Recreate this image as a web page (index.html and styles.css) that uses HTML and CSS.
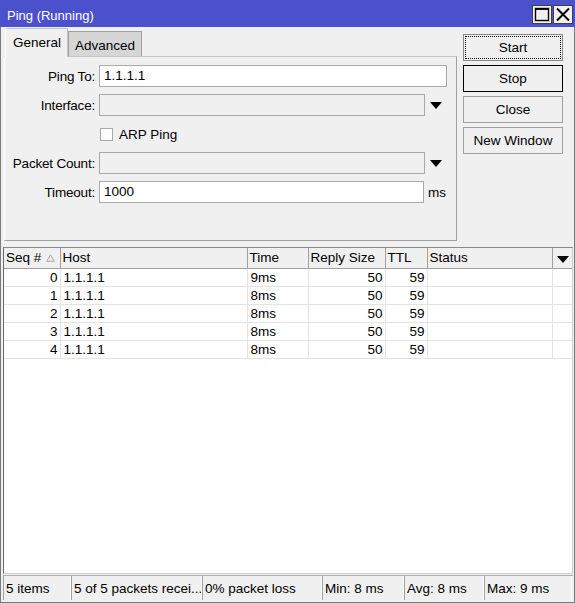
FILE: index.html
```html
<!DOCTYPE html>
<html>
<head>
<meta charset="utf-8">
<link rel="stylesheet" href="styles.css">
</head>
<body>
<div class="window">
  <div class="titlebar">
    <span class="title">Ping (Running)</span>
    <div class="tb-btns">
      <span class="tb-btn"><svg width="18" height="17" viewBox="0 0 18 17"><rect x="2.5" y="2.5" width="13" height="12" fill="none" stroke="#000" stroke-width="1.4"/><line x1="2.5" y1="3.2" x2="15.5" y2="3.2" stroke="#000" stroke-width="1.4"/></svg></span>
      <span class="tb-btn"><svg width="18" height="17" viewBox="0 0 18 17"><path d="M3 2.5 L15 14.5 M15 2.5 L3 14.5" stroke="#000" stroke-width="2" fill="none"/></svg></span>
    </div>
  </div>
  <div class="top">
    <div class="tabs-area">
      <div class="tabs">
        <div class="tab active">General</div>
        <div class="tab">Advanced</div>
      </div>
      <div class="panel">
        <div class="row">
          <label class="lbl">Ping To:</label>
          <div class="input w348">1.1.1.1</div>
        </div>
        <div class="row">
          <label class="lbl">Interface:</label>
          <div class="input disabled w326"></div>
          <span class="dd"><svg width="12" height="7" viewBox="0 0 12 7"><path d="M0 0 H12 L6 7 Z" fill="#000"/></svg></span>
        </div>
        <div class="row">
          <span class="lbl"></span>
          <span class="checkbox"></span>
          <span class="cb-label">ARP Ping</span>
        </div>
        <div class="row">
          <label class="lbl">Packet Count:</label>
          <div class="input disabled w326"></div>
          <span class="dd"><svg width="12" height="7" viewBox="0 0 12 7"><path d="M0 0 H12 L6 7 Z" fill="#000"/></svg></span>
        </div>
        <div class="row">
          <label class="lbl">Timeout:</label>
          <div class="input w325">1000</div>
          <span class="unit">ms</span>
        </div>
      </div>
    </div>
    <div class="buttons">
      <div class="btn focus"><span>Start</span></div>
      <div class="btn default"><span>Stop</span></div>
      <div class="btn"><span>Close</span></div>
      <div class="btn"><span>New Window</span></div>
    </div>
  </div>
  <div class="table-wrap">
    <table class="grid">
      <colgroup>
        <col class="c-seq"><col class="c-host"><col class="c-time"><col class="c-size"><col class="c-ttl"><col class="c-status"><col class="c-menu">
      </colgroup>
      <thead>
        <tr>
          <th><span class="th-seq">Seq # <svg class="sort" width="9" height="8" viewBox="0 0 9 8"><path d="M4.5 0.8 L8.3 7.3 H0.7 Z" fill="none" stroke="#a8a8a8" stroke-width="1"/></svg></span></th>
          <th>Host</th>
          <th>Time</th>
          <th>Reply Size</th>
          <th>TTL</th>
          <th>Status</th>
          <th class="menu"><svg width="12" height="7" viewBox="0 0 12 7"><path d="M0 0 H12 L6 7 Z" fill="#000"/></svg></th>
        </tr>
      </thead>
      <tbody>
        <tr><td class="r">0</td><td>1.1.1.1</td><td>9ms</td><td class="r">50</td><td class="r">59</td><td></td><td></td></tr>
        <tr><td class="r">1</td><td>1.1.1.1</td><td>8ms</td><td class="r">50</td><td class="r">59</td><td></td><td></td></tr>
        <tr><td class="r">2</td><td>1.1.1.1</td><td>8ms</td><td class="r">50</td><td class="r">59</td><td></td><td></td></tr>
        <tr><td class="r">3</td><td>1.1.1.1</td><td>8ms</td><td class="r">50</td><td class="r">59</td><td></td><td></td></tr>
        <tr><td class="r">4</td><td>1.1.1.1</td><td>8ms</td><td class="r">50</td><td class="r">59</td><td></td><td></td></tr>
      </tbody>
    </table>
  </div>
  <div class="statusbar">
    <div class="sb w67">5 items</div>
    <div class="sb w131">5 of 5 packets recei...</div>
    <div class="sb w120">0% packet loss</div>
    <div class="sb w82">Min: 8 ms</div>
    <div class="sb w80">Avg: 8 ms</div>
    <div class="sb w89">Max: 9 ms</div>
  </div>
</div>
</body>
</html>
```

FILE: styles.css
```css
* { box-sizing: border-box; }
html, body { margin: 0; padding: 0; }
body {
  font-family: "Liberation Sans", Arial, sans-serif;
  font-size: 13.5px;
  color: #000;
  background: #f0f0f0;
}
.window {
  width: 575px;
  height: 603px;
  border: 1px solid #7a7a7a;
  border-top: none;
  background: #f0f0f0;
  display: flex;
  flex-direction: column;
}
.titlebar {
  height: 27px;
  background: #4b50cc;
  margin: 0 -1px;
  display: flex;
  align-items: center;
  justify-content: space-between;
  padding: 0 2px 0 7px;
}
.title {
  color: #fff;
  font-size: 13px;
  padding-top: 3px;
}
.tb-btns { display: flex; gap: 1px; margin-top: 1px; }
.tb-btn {
  width: 20px;
  height: 19px;
  background: #f0f0f0;
  border: 1px solid #404040;
  display: flex;
  align-items: center;
  justify-content: center;
}
.tb-btn svg { display: block; }

.top {
  display: flex;
  align-items: flex-start;
}
.tabs-area {
  margin-left: 3px;
  width: 453px;
}
.tabs {
  display: flex;
  align-items: flex-end;
  height: 29px;
  padding-left: 1px;
}
.tab {
  height: 25px;
  padding: 2px 6px 0 6px;
  background: #d6d6d6;
  border: 1px solid #a0a0a0;
  border-bottom: none;
  display: flex;
  align-items: center;
}
.tab.active {
  height: 29px;
  background: #f0f0f0;
  border-color: #c4c4c4;
  border-left-color: #fff;
  margin-bottom: -1px;
  padding: 0 6px 1px 7px;
  z-index: 1;
  position: relative;
}
.panel {
  height: 185px;
  border: 1px solid #a0a0a0;
  border-top-color: #c4c4c4;
  border-left-color: #fff;
  padding: 8px 0 0 0;
  display: flex;
  flex-direction: column;
  gap: 7px;
}
.row {
  display: flex;
  align-items: center;
  height: 22px;
}
.lbl {
  width: 90px;
  text-align: right;
  margin-right: 4px;
  white-space: nowrap;
  letter-spacing: -0.2px;
}
.input {
  height: 22px;
  background: #fff;
  border: 1px solid #a9a9a9;
  padding: 0 4px;
  line-height: 20px;
}
.input.disabled { background: #f0f0f0; }
.w348 { width: 348px; }
.w326 { width: 326px; }
.w325 { width: 325px; }
.dd {
  width: 22px;
  display: flex;
  justify-content: center;
  padding-top: 1px;
}
.dd svg { display: block; }
.unit { margin-left: 4px; }
.checkbox {
  width: 13px;
  height: 13px;
  background: #fff;
  border: 1px solid #a9a9a9;
  margin-left: 1px;
}
.cb-label { margin-left: 6px; }

.buttons {
  margin-left: 6px;
  margin-top: 7px;
  display: flex;
  flex-direction: column;
  gap: 4px;
}
.btn {
  width: 100px;
  height: 27px;
  border: 1px solid #a0a0a0;
  background: #f0f0f0;
  display: flex;
  align-items: center;
  justify-content: center;
}
.btn.default { border-color: #000; }
.btn.focus {
  border-color: #8a8a8a;
  padding: 1px;
}
.btn.focus span {
  flex: 1;
  align-self: stretch;
  border: 1px dotted #000;
  display: flex;
  align-items: center;
  justify-content: center;
}

.table-wrap {
  margin: 6px 1px 0 2px;
  height: 327px;
  background: #fff;
  border: 1px solid #8a8a8a;
  border-right-color: #d0d0d0;
  border-bottom-color: #d0d0d0;
  border-left-color: #6a6a6a;
  overflow: hidden;
}
.grid {
  border-collapse: collapse;
  table-layout: fixed;
  width: 569px;
}
.c-seq { width: 56px; }
.c-host { width: 187px; }
.c-time { width: 61px; }
.c-size { width: 77px; }
.c-ttl { width: 42px; }
.c-status { width: 125px; }
.c-menu { width: 21px; }
.grid th {
  height: 20px;
  background: #f0f0f0;
  font-weight: normal;
  text-align: left;
  padding: 0 2px;
  border-right: 1px solid #a0a0a0;
  border-bottom: 1px solid #a0a0a0;
  white-space: nowrap;
  overflow: hidden;
}
.grid th.menu { border-right: none; text-align: center; padding: 2px 0 0 0; }
.grid th.menu svg { display: inline-block; }
.th-seq { display: flex; align-items: center; }
.sort { margin-left: 5px; }
.grid td {
  height: 18px;
  padding: 0 3px;
  border-right: 1px solid #e3e3e3;
  border-bottom: 1px solid #e3e3e3;
  white-space: nowrap;
  overflow: hidden;
}
.grid td:last-child { border-right: none; }
.grid td.r { text-align: right; padding-right: 2px; }

.statusbar {
  margin: 1px 1px 0 2px;
  height: 26px;
  display: flex;
  border-top: 1px solid #b0b0b0;
}
.sb {
  height: 24px;
  border-left: 1px solid #a0a0a0;
  border-right: 1px solid #fff;
  padding: 0 2px 0 2px;
  display: flex;
  align-items: center;
  white-space: nowrap;
  overflow: hidden;
}
.w67 { width: 68px; }
.w131 { width: 131px; }
.w120 { width: 120px; }
.w82 { width: 82px; }
.w80 { width: 80px; }
.w89 { width: 88px; }
```
